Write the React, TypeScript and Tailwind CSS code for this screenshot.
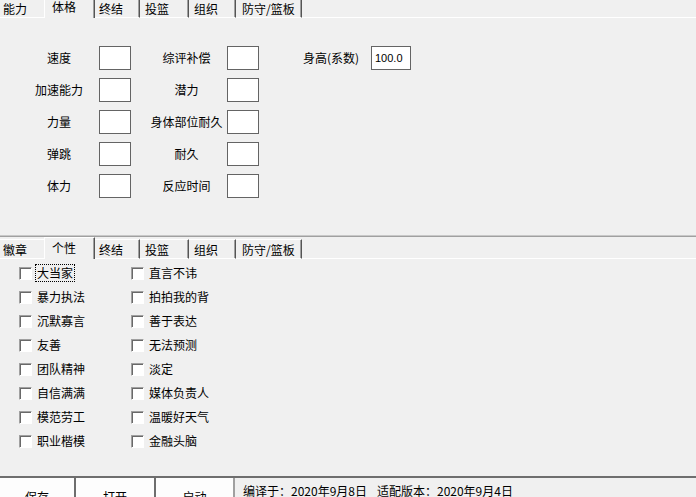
import React from "react";

type Tab = { label: string; cls: string; active?: boolean };

const topTabs: Tab[] = [
  { label: "能力", cls: "w-[44px] pl-[3px]" },
  { label: "体格", cls: "w-[51px] pl-[7px]", active: true },
  { label: "终结", cls: "w-[45px] pl-[4px]" },
  { label: "投篮", cls: "w-[49px] pl-[5px]" },
  { label: "组织", cls: "w-[47px] pl-[5px]" },
  { label: "防守/篮板", cls: "w-[66px] pl-[6px]" },
];

const bottomTabs: Tab[] = [
  { label: "徽章", cls: "w-[44px] pl-[3px]" },
  { label: "个性", cls: "w-[51px] pl-[7px]", active: true },
  { label: "终结", cls: "w-[45px] pl-[4px]" },
  { label: "投篮", cls: "w-[49px] pl-[5px]" },
  { label: "组织", cls: "w-[47px] pl-[5px]" },
  { label: "防守/篮板", cls: "w-[66px] pl-[6px]" },
];

const TabBar: React.FC<{ tabs: Tab[]; className?: string }> = ({ tabs, className }) => (
  <div className={`flex h-[22px] items-start ${className ?? ""}`}>
    {tabs.map((t, i) =>
      t.active ? (
        <div
          key={t.label}
          className={`h-[22px] shrink-0 border-t border-l border-r border-t-white border-l-white border-r-[#555] pt-[4px] leading-[12px] shadow-[inset_-1px_0_0_#a0a0a0] ${t.cls}`}
        >
          {t.label}
        </div>
      ) : (
        <div
          key={t.label + i}
          className={`mt-[2px] h-[20px] shrink-0 border-t border-b border-t-white border-b-white pt-[4px] leading-[12px] ${
            i === 0 ? "" : "border-r border-r-[#555] shadow-[inset_-1px_0_0_#a0a0a0]"
          } ${t.cls}`}
        >
          {t.label}
        </div>
      )
    )}
    <div className="h-[22px] flex-1 border-b border-b-white" />
  </div>
);

const Box: React.FC<{ value?: string; wide?: boolean }> = ({ value, wide }) => (
  <div
    className={`h-[24px] shrink-0 border border-[#646464] bg-white pl-[3px] font-['Liberation_Sans',sans-serif] text-[11px] leading-[22px] ${
      wide ? "w-[40px]" : "w-[32px]"
    }`}
  >
    {value}
  </div>
);

const rows = [
  ["速度", "综评补偿"],
  ["加速能力", "潜力"],
  ["力量", "身体部位耐久"],
  ["弹跳", "耐久"],
  ["体力", "反应时间"],
];

const leftTraits = ["大当家", "暴力执法", "沉默寡言", "友善", "团队精神", "自信满满", "模范劳工", "职业楷模"];
const rightTraits = ["直言不讳", "拍拍我的背", "善于表达", "无法预测", "淡定", "媒体负责人", "温暖好天气", "金融头脑"];

const Check: React.FC<{ label: string; focus?: boolean }> = ({ label, focus }) => (
  <div className="flex h-[24px] items-center gap-[5px]">
    <div className="h-[13px] w-[13px] shrink-0 border border-t-[#a0a0a0] border-l-[#a0a0a0] border-r-white border-b-white bg-white shadow-[inset_1px_1px_0_#696969]" />
    <span
      className={`leading-[14px] ${focus ? "outline-1 outline-offset-[1px] outline-dotted outline-black" : ""}`}
    >
      {label}
    </span>
  </div>
);

export default function App() {
  return (
    <div className="flex h-[497px] w-[696px] flex-col overflow-hidden bg-[#f0f0f0] font-['Noto_Sans_CJK_SC','Noto_Sans',sans-serif] text-[12px] text-black">
      <div className="h-[18px] shrink-0 overflow-hidden">
        <TabBar tabs={topTabs} className="-mt-[4px]" />
      </div>

      <div className="flex h-[217px] shrink-0 flex-col gap-[8px] pl-[20px] pt-[28px]">
        {rows.map(([a, b], i) => (
          <div key={a} className="flex h-[24px] items-center leading-[24px]">
            <div className="w-[78px] text-center">{a}</div>
            <div className="ml-[1px]">
              <Box />
            </div>
            <div className="ml-[15px] w-[81px] whitespace-nowrap text-center">{b}</div>
            <Box />
            {i === 0 && (
              <>
                <div className="ml-[42px] w-[60px] whitespace-nowrap text-center">身高(系数)</div>
                <div className="ml-[10px]">
                  <Box value="100.0" wide />
                </div>
              </>
            )}
          </div>
        ))}
      </div>

      <div className="h-px shrink-0 bg-[#c8c8c8]" />
      <div className="h-px shrink-0 bg-[#a0a0a0]" />

      <TabBar tabs={bottomTabs} className="shrink-0" />

      <div className="flex h-[217px] shrink-0 pl-[19px] pt-[2px]">
        <div className="flex w-[112px] flex-col">
          {leftTraits.map((t, i) => (
            <Check key={t} label={t} focus={i === 0} />
          ))}
        </div>
        <div className="flex w-[112px] flex-col">
          {rightTraits.map((t) => (
            <Check key={t} label={t} />
          ))}
        </div>
      </div>

      <div className="h-[2px] shrink-0 bg-[#6e6e6e]" />

      <div className="flex flex-1">
        <button className="flex w-[76px] justify-center border-r-2 border-r-[#6e6e6e] bg-[#fdfdfd] pt-[13px] leading-[12px]">
          保存
        </button>
        <button className="flex w-[80px] justify-center border-r-2 border-r-[#6e6e6e] bg-[#fdfdfd] pt-[13px] leading-[12px]">
          打开
        </button>
        <button className="flex w-[79px] justify-center border-r-2 border-r-[#a0a0a0] bg-[#fdfdfd] pt-[13px] leading-[12px]">
          启动
        </button>
        <div className="flex flex-1 whitespace-nowrap pl-[8px] pt-[7px] leading-[12px]">
          <span>编译于：2020年9月8日</span>
          <span className="ml-[10px]">适配版本：2020年9月4日</span>
        </div>
      </div>
    </div>
  );
}
